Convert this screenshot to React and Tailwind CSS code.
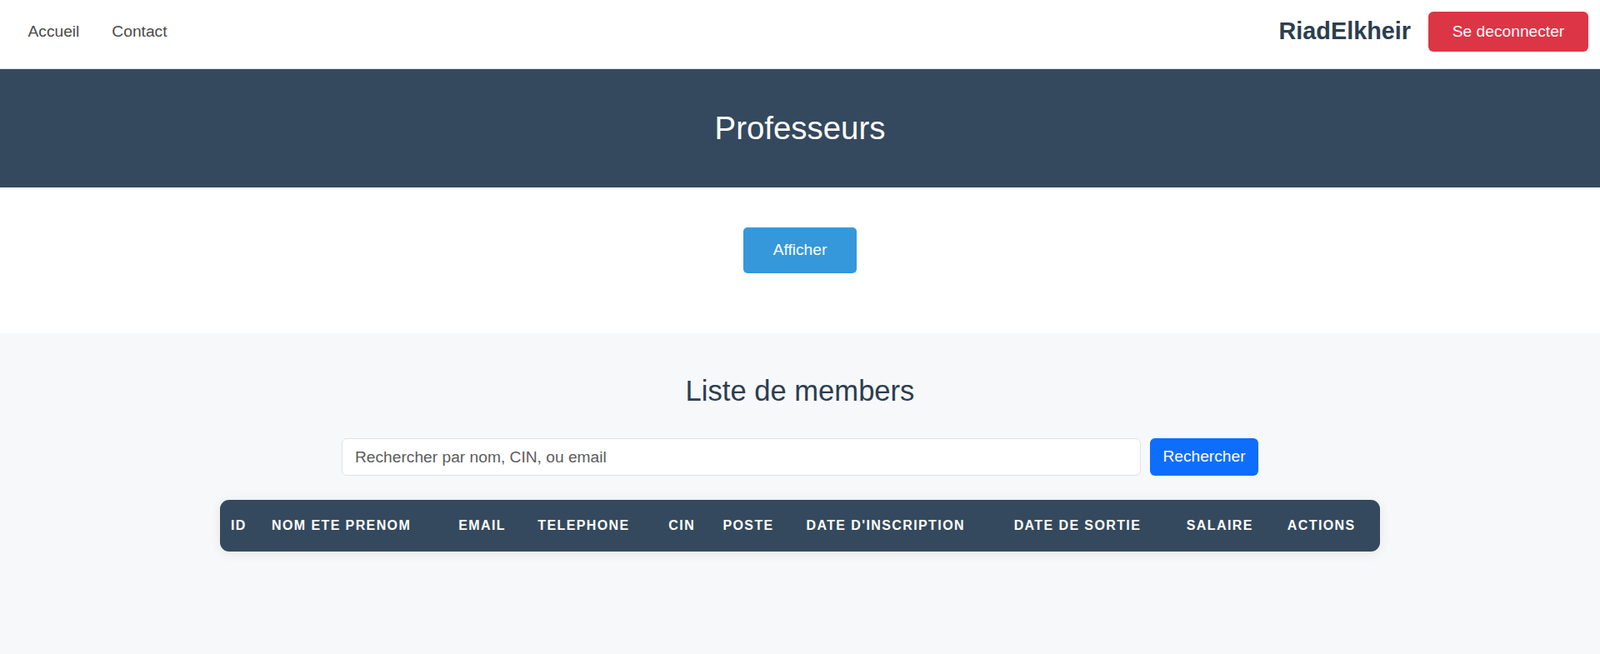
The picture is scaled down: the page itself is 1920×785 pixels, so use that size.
import { useState } from 'react'

const COLONNES = [
  { label: 'ID', w: 'w-[49px]' },
  { label: 'Nom ete prenom', w: 'w-[224px]' },
  { label: 'Email', w: 'w-[95px]' },
  { label: 'Telephone', w: 'w-[157px]' },
  { label: 'CIN', w: 'w-[65px]' },
  { label: 'Poste', w: 'w-[100px]' },
  { label: "Date d'inscription", w: 'w-[249px]' },
  { label: 'Date de sortie', w: 'w-[207px]' },
  { label: 'Salaire', w: 'w-[121px]' },
  { label: 'Actions', w: 'w-[124px]' },
]

export default function App() {
  const [recherche, setRecherche] = useState('')
  const [membres] = useState([])

  return (
    <div className="min-h-screen flex flex-col bg-white font-['Liberation_Sans',Arial,sans-serif]">
      {/* Navbar */}
      <nav className="flex items-center justify-between px-[14px] pt-[14px] pb-[20px] bg-white border-b border-[#e4e4e4]">
        <ul className="flex items-center">
          <li>
            <a href="#" className="block px-[19.5px] text-[19.2px] text-[#4a4a4a]">Accueil</a>
          </li>
          <li>
            <a href="#" className="block px-[19.5px] text-[19.2px] text-[#4a4a4a]">Contact</a>
          </li>
        </ul>
        <div className="flex items-center gap-[21px]">
          <span className="text-[28.8px] font-bold text-[#2c3e50]">RiadElkheir</span>
          <button className="h-[48px] w-[192px] rounded-[6px] bg-[#dc3545] text-white text-[19.2px]">
            Se deconnecter
          </button>
        </div>
      </nav>

      {/* Bandeau */}
      <header className="h-[142px] bg-[#34495e] flex items-center justify-center">
        <h1 className="text-[38.4px] text-white font-normal">Professeurs</h1>
      </header>

      {/* Actions */}
      <div className="h-[175px] pt-[48px] flex justify-center">
        <button className="w-[136px] h-[55px] rounded-[5px] bg-[#3498db] text-white text-[19.2px]">
          Afficher
        </button>
      </div>

      {/* Liste */}
      <section className="flex-1 bg-[#f7f8fa] pt-[48px] pb-[120px]">
        <h2 className="text-center text-[34.6px] leading-[42px] text-[#2c3e50] font-normal">Liste de members</h2>

        <form
          className="w-[1100px] mx-auto mt-[36px] flex gap-[11px]"
          onSubmit={e => e.preventDefault()}
        >
          <input
            type="text"
            value={recherche}
            onChange={e => setRecherche(e.target.value)}
            placeholder="Rechercher par nom, CIN, ou email"
            className="w-[959px] h-[45px] px-[15px] rounded-[6px] border border-[#dee2e6] bg-white text-[19.2px] text-[#333] placeholder:text-[#5c5c5c] focus:outline-none"
          />
          <button type="submit" className="w-[130px] h-[45px] rounded-[6px] bg-[#0d6efd] text-white text-[19.2px]">
            Rechercher
          </button>
        </form>

        <div className="w-[1392px] mx-auto mt-[29px] rounded-[11px] overflow-hidden bg-[#34495e] shadow-[0_2px_14px_rgba(0,0,0,0.08)]">
          <table className="w-full table-fixed border-collapse">
            <thead>
              <tr className="h-[62px]">
                {COLONNES.map(c => (
                  <th
                    key={c.label}
                    className={`${c.w} pl-[13px] text-left text-[16px] font-bold uppercase tracking-[1.4px] text-white whitespace-nowrap`}
                  >
                    {c.label}
                  </th>
                ))}
              </tr>
            </thead>
            <tbody>
              {membres.map(m => (
                <tr key={m.id}>
                  <td>{m.id}</td>
                </tr>
              ))}
            </tbody>
          </table>
        </div>
      </section>
    </div>
  )
}
